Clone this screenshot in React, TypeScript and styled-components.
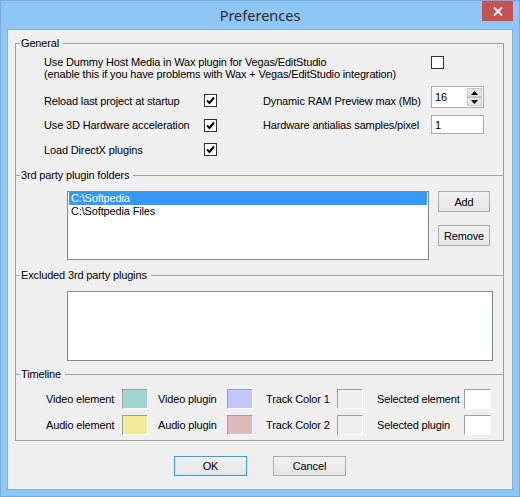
import styled, { createGlobalStyle } from 'styled-components';

const GlobalStyle = createGlobalStyle`
  html, body { margin: 0; padding: 0; }
  body {
    width: 520px;
    height: 497px;
    overflow: hidden;
    font-family: "Liberation Sans", Arial, sans-serif;
    font-size: 11px;
    letter-spacing: -0.15px;
    color: #000;
  }
  * { box-sizing: border-box; }
`;

const Window = styled.div`
  width: 520px;
  height: 497px;
  background: #8ec6f6;
  border: 1px solid #74ade2;
  padding: 0 6px 6px;
  display: flex;
  flex-direction: column;
`;

const TitleBar = styled.div`
  height: 28px;
  display: grid;
  grid-template-columns: 1fr auto 1fr;
  align-items: start;
`;

const Title = styled.div`
  grid-column: 2;
  font-family: "Noto Sans", "Open Sans", sans-serif;
  font-size: 14.5px;
  letter-spacing: 0;
  line-height: 28px;
  color: #2b2b2b;
`;

const CloseButton = styled.div`
  grid-column: 3;
  justify-self: end;
  width: 31px;
  height: 20px;
  background: #c75050;
  display: flex;
  align-items: center;
  justify-content: center;
`;

const Client = styled.div`
  flex: 1;
  background: #f0f0f0;
  border: 1px solid #7eb1de;
  padding-top: 13px;
  display: flex;
  flex-direction: column;
`;

const GroupBox = styled.div`
  margin: 0 8px 0 7px;
  border: 1px solid #a0a0a0;
  border-top: none;
`;

const Section = styled.section<{ $h: number }>`
  height: ${p => p.$h}px;
  border-top: 1px solid #a0a0a0;
`;

const Legend = styled.div`
  width: fit-content;
  height: 13px;
  line-height: 13px;
  margin: -7px 0 0 4px;
  padding: 0 4px 0 1px;
  background: #f0f0f0;
`;

const GeneralGrid = styled.div`
  display: grid;
  grid-template-columns: 160px 13px 46px 168px 53px;
  grid-template-rows: auto 25px 24px 25px;
  align-items: center;
  margin-top: 6px;
  padding-left: 28px;
`;

const Note = styled.div`
  grid-column: 1 / 5;
  line-height: 12px;
  margin-bottom: 8px;
  align-self: start;
`;

const Label = styled.div<{ $col?: number }>`
  grid-column: ${p => p.$col ?? 1};
  white-space: nowrap;
`;

const Check = styled.div<{ $col?: number; $top?: boolean }>`
  grid-column: ${p => p.$col ?? 2};
  align-self: ${p => (p.$top ? 'start' : 'center')};
  width: 13px;
  height: 13px;
  border: 1px solid #333;
  background: #fff;
  display: flex;
  align-items: center;
  justify-content: center;
`;

const Field = styled.div<{ $h: number; $shift: number }>`
  grid-column: 5;
  align-self: start;
  height: ${p => p.$h}px;
  margin-top: ${p => p.$shift}px;
  border: 1px solid #abadb3;
  background: #fff;
  display: flex;
  align-items: center;
  padding-left: 3px;
`;

const FieldText = styled.span`
  flex: 1;
`;

const Spinner = styled.div`
  width: 15px;
  height: 18px;
  margin-right: 1px;
  display: flex;
  flex-direction: column;
`;

const SpinHalf = styled.div`
  flex: 1;
  background: #e6e6e6;
  border: 1px solid #c8c8c8;
  display: flex;
  align-items: center;
  justify-content: center;
`;

const FolderBody = styled.div`
  display: flex;
  align-items: flex-start;
  margin-top: 9px;
  padding-left: 51px;
`;

const ListBox = styled.div<{ $w: number; $h: number }>`
  width: ${p => p.$w}px;
  height: ${p => p.$h}px;
  border: 1px solid #828790;
  background: #fff;
  padding: 0 1px;
`;

const ListItem = styled.div<{ $selected?: boolean }>`
  height: 13px;
  line-height: 13px;
  padding-left: 2px;
  background: ${p => (p.$selected ? '#3399ff' : 'transparent')};
  color: ${p => (p.$selected ? '#fff' : '#000')};
`;

const ButtonColumn = styled.div`
  display: flex;
  flex-direction: column;
  gap: 13px;
  margin-left: 9px;
`;

const Button = styled.div<{ $w: number; $h: number; $default?: boolean }>`
  width: ${p => p.$w}px;
  height: ${p => p.$h}px;
  border: 1px solid ${p => (p.$default ? '#3399ff' : '#acacac')};
  background: linear-gradient(#f2f2f2, #e5e5e5);
  display: flex;
  align-items: center;
  justify-content: center;
`;

const ExcludedBody = styled.div`
  margin-top: 9px;
  padding-left: 51px;
`;

const TimelineGrid = styled.div`
  display: grid;
  grid-template-columns: 76px 26px 79px 26px 84px 26px 101px 27px;
  grid-template-rows: 20px 20px;
  row-gap: 6px;
  align-items: center;
  margin-top: 8px;
  padding-left: 30px;
`;

const SwatchLabel = styled.div<{ $pad: number }>`
  padding-left: ${p => p.$pad}px;
  white-space: nowrap;
`;

const Swatch = styled.div<{ $color: string }>`
  height: 20px;
  background: ${p => p.$color};
  border-top: 1px solid #a0a0a0;
  border-left: 1px solid #a0a0a0;
  border-right: 1px solid #fff;
  border-bottom: 1px solid #fff;
`;

const Footer = styled.div`
  display: flex;
  justify-content: center;
  gap: 26px;
  margin-top: 15px;
`;

const CheckMark = () => (
  <svg width="9" height="9" viewBox="0 0 9 9">
    <path d="M1 4.5 L3.5 7 L8 1.5" fill="none" stroke="#000" strokeWidth="2" />
  </svg>
);

const Arrow = ({ up }: { up?: boolean }) => (
  <svg width="7" height="4" viewBox="0 0 7 4">
    <path d={up ? 'M0 4 L3.5 0 L7 4 Z' : 'M0 0 L3.5 4 L7 0 Z'} fill="#000" />
  </svg>
);

const options = ['Reload last project at startup', 'Use 3D Hardware acceleration', 'Load DirectX plugins'];

const swatchRows = [
  [
    ['Video element', '#9fd6d1'],
    ['Video plugin', '#c6c6ff'],
    ['Track Color 1', '#f0f0f0'],
    ['Selected element', '#ffffff'],
  ],
  [
    ['Audio element', '#f0ec98'],
    ['Audio plugin', '#dcbaba'],
    ['Track Color 2', '#f0f0f0'],
    ['Selected plugin', '#ffffff'],
  ],
];

const labelPads = [0, 10, 13, 14];

export default function App() {
  return (
    <>
      <GlobalStyle />
      <Window>
        <TitleBar>
          <Title>Preferences</Title>
          <CloseButton>
            <svg width="10" height="9" viewBox="0 0 10 9">
              <path d="M1 0.5 L9 8.5 M9 0.5 L1 8.5" stroke="#fff" strokeWidth="2" />
            </svg>
          </CloseButton>
        </TitleBar>
        <Client>
          <GroupBox>
            <Section $h={132}>
              <Legend>General</Legend>
              <GeneralGrid>
                <Note>
                  Use Dummy Host Media in Wax plugin for Vegas/EditStudio
                  <br />
                  (enable this if you have problems with Wax + Vegas/EditStudio integration)
                </Note>
                <Check $col={5} $top />
                {options.map((text, i) => (
                  <div key={text} style={{ display: 'contents' }}>
                    <Label style={{ gridRow: i + 2 }}>{text}</Label>
                    <Check style={{ gridRow: i + 2 }}>
                      <CheckMark />
                    </Check>
                  </div>
                ))}
                <Label $col={4} style={{ gridRow: 2 }}>
                  Dynamic RAM Preview max (Mb)
                </Label>
                <Field $h={22} $shift={-2} style={{ gridRow: 2 }}>
                  <FieldText>16</FieldText>
                  <Spinner>
                    <SpinHalf>
                      <Arrow up />
                    </SpinHalf>
                    <SpinHalf>
                      <Arrow />
                    </SpinHalf>
                  </Spinner>
                </Field>
                <Label $col={4} style={{ gridRow: 3 }}>
                  Hardware antialias samples/pixel
                </Label>
                <Field $h={19} $shift={2} style={{ gridRow: 3 }}>
                  <FieldText>1</FieldText>
                </Field>
              </GeneralGrid>
            </Section>
            <Section $h={100}>
              <Legend>3rd party plugin folders</Legend>
              <FolderBody>
                <ListBox $w={362} $h={69}>
                  <ListItem $selected>C:\Softpedia</ListItem>
                  <ListItem>C:\Softpedia Files</ListItem>
                </ListBox>
                <ButtonColumn>
                  <Button $w={52} $h={21}>Add</Button>
                  <Button $w={52} $h={21}>Remove</Button>
                </ButtonColumn>
              </FolderBody>
            </Section>
            <Section $h={99}>
              <Legend>Excluded 3rd party plugins</Legend>
              <ExcludedBody>
                <ListBox $w={426} $h={70} />
              </ExcludedBody>
            </Section>
            <Section $h={66}>
              <Legend>Timeline</Legend>
              <TimelineGrid>
                {swatchRows.map(row =>
                  row.map(([label, color], i) => (
                    <div key={label} style={{ display: 'contents' }}>
                      <SwatchLabel $pad={labelPads[i]}>{label}</SwatchLabel>
                      <Swatch $color={color} />
                    </div>
                  ))
                )}
              </TimelineGrid>
            </Section>
          </GroupBox>
          <Footer>
            <Button $w={73} $h={20} $default>OK</Button>
            <Button $w={73} $h={20}>Cancel</Button>
          </Footer>
        </Client>
      </Window>
    </>
  );
}
